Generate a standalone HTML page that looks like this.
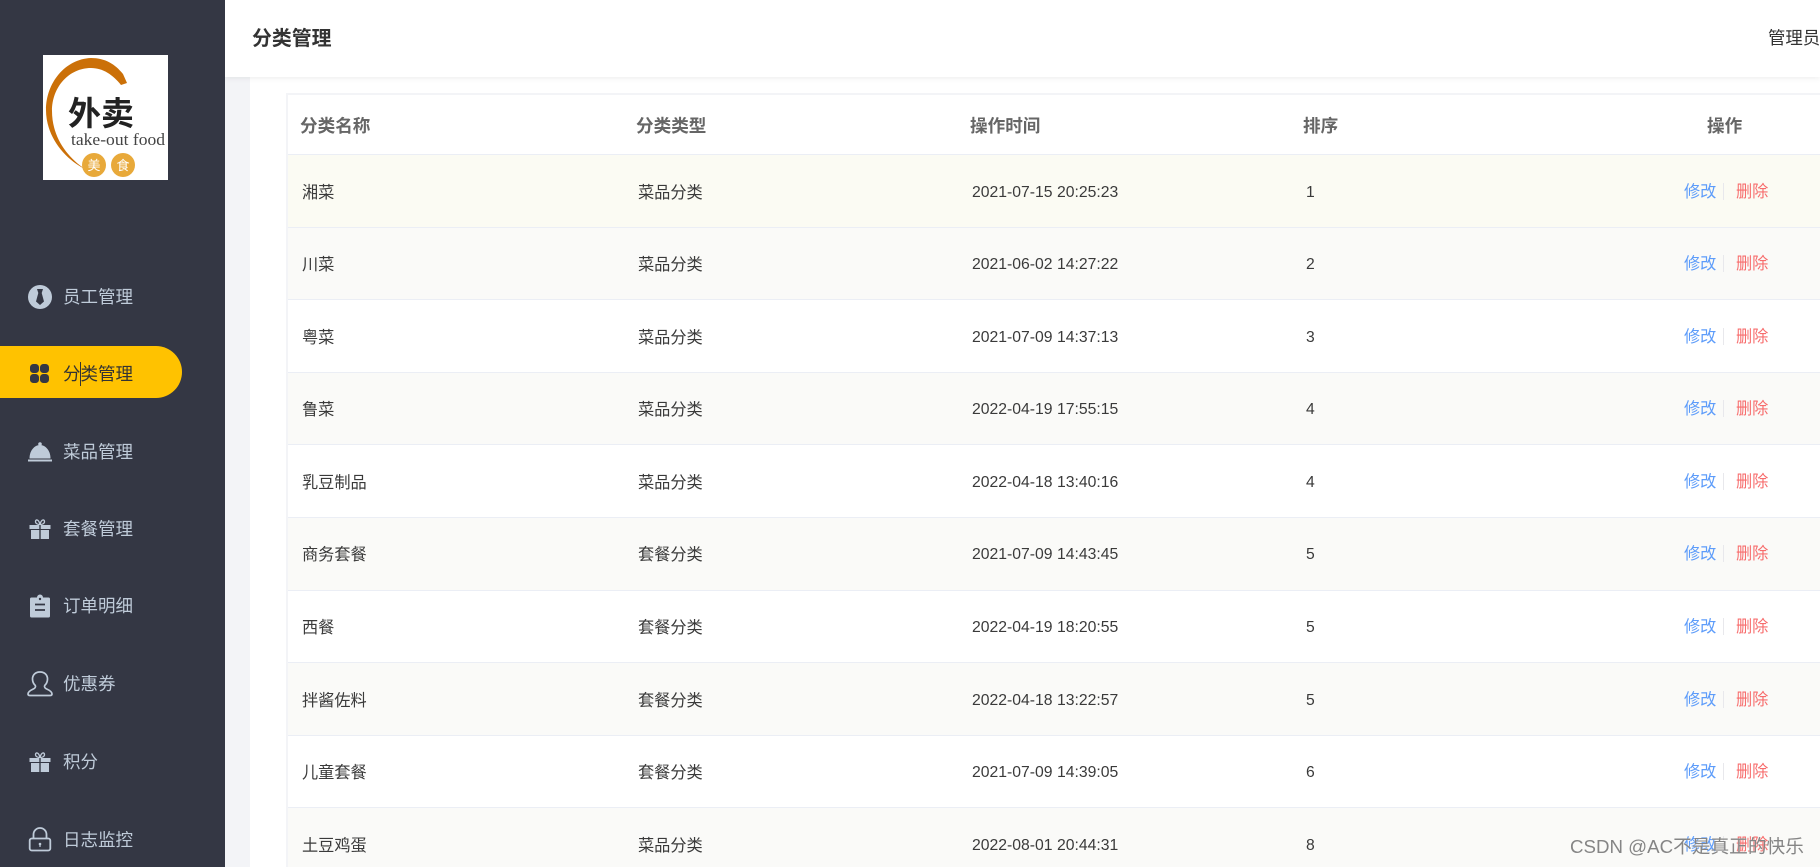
<!DOCTYPE html>
<html lang="zh"><head><meta charset="utf-8"><title>分类管理</title>
<style>
*{margin:0;padding:0;box-sizing:border-box}
html,body{width:1820px;height:867px;overflow:hidden;background:#fff}
body{position:relative;font-family:"Liberation Sans","Noto Sans CJK SC",sans-serif;color:#333}
.abs{position:absolute}
#side{position:absolute;left:0;top:0;width:225px;height:867px;background:#343744}
.nav{position:absolute;left:63px;font-size:17.5px;line-height:26px;height:26px;color:#bfcbd9;white-space:nowrap}
.ic{position:absolute;left:26px;width:28px;height:28px}
#pill{position:absolute;left:0;top:346px;width:182px;height:52px;background:#ffc200;border-radius:0 26px 26px 0}
#gray{position:absolute;left:225px;top:77px;width:25px;height:790px;background:#f3f4f7}
#hdr{position:absolute;left:225px;top:0;width:1595px;height:77px;background:#fff;box-shadow:0 2px 5px rgba(0,0,0,.06)}
#hdr b{position:absolute;left:27px;top:25px;font-size:19.9px;line-height:28px;color:#333}
#hdr span{position:absolute;left:1543px;top:25px;font-size:17.4px;line-height:26px;color:#333;white-space:nowrap}
#tbl{position:absolute;left:286px;top:93px;width:1534px;height:774px;border-left:2px solid #f3f4f7;border-top:2px solid #f3f4f7}
.th,.r{position:absolute;left:288px;width:1532px;border-bottom:1px solid #ebeef5}
.th{top:95px;height:60px}
.th span{position:absolute;top:18px;font-size:17.6px;line-height:26px;font-weight:bold;color:#666;white-space:nowrap}
.r{height:72.6px;font-size:16.2px}
.r span{position:absolute;top:24.4px;line-height:26px;white-space:nowrap;color:#3a3a3a}
.r span.tm{font-size:15.75px}
.r span.s{font-size:15.7px}
.r span.e{left:1396px;color:#5d9cfa;top:23.4px}
.r span.d{left:1448px;color:#f76c6c;top:23.4px}
.r i{position:absolute;left:1435px;top:27.4px;width:1px;height:17px;background:#e8e8ec}
.r1 span{top:25px}
.r1 span.e,.r1 span.d{top:24px}
.r1 i{top:28px}
.a{left:14px}.b{left:350px}.c{left:684px}.n{left:1018px}
.o{background:#fafaf8}.w{background:#fff}
#wm{position:absolute;left:1570px;top:835px;font-size:18.7px;line-height:24px;color:#858585;white-space:nowrap;text-shadow:0 0 1px rgba(255,255,255,.8)}
</style></head><body>

<div id="gray"></div>
<div id="tbl"></div>

<div class="th"><span style="left:12px">分类名称</span><span style="left:348px">分类类型</span><span style="left:682px">操作时间</span><span style="left:1015px">排序</span><span style="left:1419px">操作</span></div>

<div class="r r1" style="top:155px;background:#fbfbf3;height:73px"><span class="a">湘菜</span><span class="b">菜品分类</span><span class="c tm">2021-07-15 20:25:23</span><span class="n s">1</span><span class="e">修改</span><i></i><span class="d">删除</span></div>
<div class="r o" style="top:227.6px"><span class="a">川菜</span><span class="b">菜品分类</span><span class="c tm">2021-06-02 14:27:22</span><span class="n s">2</span><span class="e">修改</span><i></i><span class="d">删除</span></div>
<div class="r w" style="top:300.2px"><span class="a">粤菜</span><span class="b">菜品分类</span><span class="c tm">2021-07-09 14:37:13</span><span class="n s">3</span><span class="e">修改</span><i></i><span class="d">删除</span></div>
<div class="r o" style="top:372.8px"><span class="a">鲁菜</span><span class="b">菜品分类</span><span class="c tm">2022-04-19 17:55:15</span><span class="n s">4</span><span class="e">修改</span><i></i><span class="d">删除</span></div>
<div class="r w" style="top:445.4px"><span class="a">乳豆制品</span><span class="b">菜品分类</span><span class="c tm">2022-04-18 13:40:16</span><span class="n s">4</span><span class="e">修改</span><i></i><span class="d">删除</span></div>
<div class="r o" style="top:518px"><span class="a">商务套餐</span><span class="b">套餐分类</span><span class="c tm">2021-07-09 14:43:45</span><span class="n s">5</span><span class="e">修改</span><i></i><span class="d">删除</span></div>
<div class="r w" style="top:590.6px"><span class="a">西餐</span><span class="b">套餐分类</span><span class="c tm">2022-04-19 18:20:55</span><span class="n s">5</span><span class="e">修改</span><i></i><span class="d">删除</span></div>
<div class="r o" style="top:663.2px"><span class="a">拌酱佐料</span><span class="b">套餐分类</span><span class="c tm">2022-04-18 13:22:57</span><span class="n s">5</span><span class="e">修改</span><i></i><span class="d">删除</span></div>
<div class="r w" style="top:735.8px"><span class="a">儿童套餐</span><span class="b">套餐分类</span><span class="c tm">2021-07-09 14:39:05</span><span class="n s">6</span><span class="e">修改</span><i></i><span class="d">删除</span></div>
<div class="r o" style="top:808.4px;border-bottom:0;height:59px"><span class="a">土豆鸡蛋</span><span class="b">菜品分类</span><span class="c tm">2022-08-01 20:44:31</span><span class="n s">8</span><span class="e">修改</span><i></i><span class="d">删除</span></div>

<div id="hdr"><b>分类管理</b><span>管理员</span></div>

<div id="side">
  <svg class="abs" style="left:43px;top:55px" width="125" height="125" viewBox="0 0 125 125">
    <rect width="125" height="125" fill="#fff"/>
    <path d="M84 28L80 19C72 9 62 3 48 3C22 4 3 28 3 55C3 82 22 104 42 114C24 102 9 82 9 56C9 32 26 13 48 13C60 13 70 20 78 30Z" fill="#cb7008"/>
    <text x="25" y="70" font-size="33" font-weight="700" fill="#222" font-family="'Noto Sans CJK SC',sans-serif" textLength="66">外卖</text>
    <text x="28" y="90" font-size="17" fill="#444" font-family="'Liberation Serif',serif" textLength="94" lengthAdjust="spacingAndGlyphs">take-out food</text>
    <circle cx="51" cy="110" r="12" fill="#e8a93a"/><circle cx="80" cy="110" r="12" fill="#e8a93a"/>
    <text x="51" y="115" text-anchor="middle" font-size="13" fill="#fff" font-family="'Noto Sans CJK SC',sans-serif">美</text>
    <text x="80" y="115" text-anchor="middle" font-size="13" fill="#fff" font-family="'Noto Sans CJK SC',sans-serif">食</text>
  </svg>

  <div id="pill"></div>

  <svg class="ic" style="top:283px" viewBox="0 0 28 28"><circle cx="14" cy="14" r="12" fill="#bfcbd9"/><path d="M11 6h6l-1.300 4 2.300 8.500L14 22l-4-3.500L12.300 10z" fill="#343744"/></svg>
  <div class="nav" style="top:284px">员工管理</div>

  <svg class="ic" style="top:360px" viewBox="0 0 28 28"><rect x="4" y="4" width="9" height="9" rx="3.300" fill="#343744"/><rect x="14" y="4" width="9" height="9" rx="3.300" fill="#343744"/><rect x="4" y="14" width="9" height="9" rx="3.300" fill="#343744"/><rect x="14" y="14" width="9" height="9" rx="3.300" fill="#343744"/></svg>
  <div class="nav" style="top:361px;color:#333">分类管理</div>
  <div class="abs" style="left:80px;top:362px;width:1px;height:24px;background:#333"></div>

  <svg class="ic" style="top:438px" viewBox="0 0 28 28"><circle cx="14" cy="6" r="1.800" fill="#bfcbd9"/><path d="M3.500 20.500C3.500 12 9 7 14 7s10.500 5 10.500 13.500z" fill="#bfcbd9"/><rect x="2" y="21.500" width="24" height="2" fill="#bfcbd9"/></svg>
  <div class="nav" style="top:439px">菜品管理</div>

  <svg class="ic" style="top:515px" viewBox="0 0 28 28"><path d="M14 9.500C11.500 9.500 9.500 8.500 9.500 6.500S12.500 3.500 14 9.500c1.500-6 4.500-5 4.500-3S16.500 9.500 14 9.500z" fill="none" stroke="#bfcbd9" stroke-width="1.300"/><rect x="3.500" y="10" width="21" height="4" fill="#bfcbd9"/><rect x="5" y="15" width="18" height="9" fill="#bfcbd9"/><rect x="13.300" y="10" width="1.400" height="14" fill="#343744"/></svg>
  <div class="nav" style="top:516px">套餐管理</div>

  <svg class="ic" style="top:592px" viewBox="0 0 28 28"><path d="M5.500 5.500h5.500a3 3 0 0 1 6 0h5.500A1.500 1.500 0 0 1 24 7v17a1.500 1.500 0 0 1-1.500 1.500h-17A1.500 1.500 0 0 1 4 24V7a1.500 1.500 0 0 1 1.500-1.500z" fill="#bfcbd9"/><path d="M9 12.500h10M9 18h10" stroke="#343744" stroke-width="1.800"/><circle cx="14" cy="7" r="1.200" fill="#343744"/></svg>
  <div class="nav" style="top:593px">订单明细</div>

  <svg class="ic" style="top:670px" viewBox="0 0 28 28"><path d="M13.500 2c-4 0-7 3-7 7 0 3 1.200 5 2.800 6.500.8 1.500-.5 2.800-2 3.500C4 20.500 2 22 2 24c0 1.200 1 1.500 2 1.500h20c1 0 2-.3 2-1.500 0-2-2-3.500-5.300-5-1.500-.7-2.800-2-2-3.500 1.600-1.500 2.800-3.500 2.800-6.500 0-4-3-7-7-7z" fill="none" stroke="#bfcbd9" stroke-width="1.700"/></svg>
  <div class="nav" style="top:671px">优惠券</div>

  <svg class="ic" style="top:748px" viewBox="0 0 28 28"><path d="M14 9.500C11.500 9.500 9.500 8.500 9.500 6.500S12.500 3.500 14 9.500c1.500-6 4.500-5 4.500-3S16.500 9.500 14 9.500z" fill="none" stroke="#bfcbd9" stroke-width="1.300"/><rect x="3.500" y="10" width="21" height="4" fill="#bfcbd9"/><rect x="5" y="15" width="18" height="9" fill="#bfcbd9"/><rect x="13.300" y="10" width="1.400" height="14" fill="#343744"/></svg>
  <div class="nav" style="top:749px">积分</div>

  <svg class="ic" style="top:825px" viewBox="0 0 28 28"><path d="M7.500 13.500V9.500a6.500 6.500 0 0 1 13 0v4" fill="none" stroke="#bfcbd9" stroke-width="1.800"/><rect x="3.700" y="13.500" width="20.600" height="12" rx="2" fill="none" stroke="#bfcbd9" stroke-width="1.800"/><circle cx="14" cy="19" r="1.300" fill="#bfcbd9"/><rect x="13.400" y="19" width="1.200" height="3" fill="#bfcbd9"/></svg>
  <div class="nav" style="top:827px">日志监控</div>
</div>

<div id="wm">CSDN @AC不是真正的快乐</div>
</body></html>
